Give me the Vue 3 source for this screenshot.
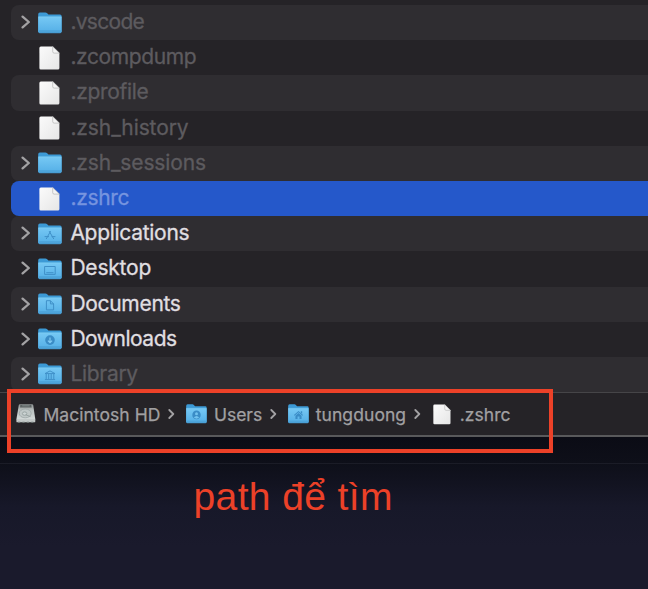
<script setup>
const rows = [
  { name: '.vscode', kind: 'folder', dim: true, ls: -0.7 },
  { name: '.zcompdump', kind: 'file', dim: true, ls: -0.38 },
  { name: '.zprofile', kind: 'file', dim: true, ls: -0.3 },
  { name: '.zsh_history', kind: 'file', dim: true, ls: -0.1 },
  { name: '.zsh_sessions', kind: 'folder', dim: true, ls: -0.15 },
  { name: '.zshrc', kind: 'file', dim: true, selected: true, ls: -0.3 },
  { name: 'Applications', kind: 'folder', glyph: 'apps', ls: -0.29 },
  { name: 'Desktop', kind: 'folder', glyph: 'desktop', ls: -0.2 },
  { name: 'Documents', kind: 'folder', glyph: 'doc', ls: -0.3 },
  { name: 'Downloads', kind: 'folder', glyph: 'down', ls: -0.48 },
  { name: 'Library', kind: 'folder', glyph: 'library', dim: true, ls: -0.3 },
]
const glyphs = {
  apps: 'M12.6 8.2L8.2 16M11.2 8.2L15.8 16M6.6 13.6H11M13.6 13.6H17.4',
  desktop: 'M6.6 8.5H17.2V16.4H6.6ZM8.3 14.7H15.5',
  doc: 'M8.4 7.7H12.4L15.6 10.9V16.9H8.4ZM12.4 7.7V10.9H15.6',
  library: 'M7 10.6L12 7.9L17 10.6ZM8.2 11V16M10.7 11V16M13.2 11V16M15.8 11V16M6.9 16.6H17.1',
}
const crumbs = [
  { name: 'Macintosh HD', kind: 'disk', ls: 0.05 },
  { name: 'Users', kind: 'folder', glyph: 'user', ls: 0 },
  { name: 'tungduong', kind: 'folder', glyph: 'home', ls: 0.08 },
  { name: '.zshrc', kind: 'file', ls: 0.05 },
]
</script>

<template>
  <div class="screen">
    <svg class="defs" width="0" height="0" aria-hidden="true">
      <defs>
        <linearGradient id="folderFace" x1="0" y1="0" x2="0" y2="1">
          <stop offset="0" stop-color="#76c8f4" />
          <stop offset="0.85" stop-color="#58b2e8" />
          <stop offset="1" stop-color="#4295cb" />
        </linearGradient>
        <linearGradient id="paper" x1="0" y1="0" x2="1" y2="1">
          <stop offset="0" stop-color="#fbfbfb" />
          <stop offset="1" stop-color="#e6e6e6" />
        </linearGradient>
        <linearGradient id="metal" x1="0" y1="0" x2="0" y2="1">
          <stop offset="0" stop-color="#8d9292" />
          <stop offset="0.4" stop-color="#b9c0bf" />
          <stop offset="1" stop-color="#d3d9d8" />
        </linearGradient>
        <symbol id="folder" viewBox="0 0 24 22">
          <path d="M0.2 2.2Q0.2 0.4 1.8 0.4H7.4Q8.4 0.4 9.2 1.3L10.4 2.4H22Q23.6 2.4 23.6 4V20H0.2Z" fill="#3c9ad6" />
          <path d="M0.2 4.9H23.6V19.8Q23.6 21.2 22.2 21.2H1.6Q0.2 21.2 0.2 19.8Z" fill="url(#folderFace)" />
          <path d="M0.3 4.8H23.5" stroke="#85d2f7" stroke-width="0.7" />
          <path d="M1 18.8H23" stroke="#3c90c6" stroke-width="0.5" />
        </symbol>
        <symbol id="file" viewBox="0 0 21 24">
          <path d="M1.8 0.4H13.8L20.4 7V21.9Q20.4 23.4 18.9 23.4H1.8Q0.4 23.4 0.4 21.9V1.9Q0.4 0.4 1.8 0.4Z" fill="url(#paper)" />
          <path d="M13.7 0.5V5.6Q13.7 7.1 15.2 7.1H20.4Z" fill="#f4f4f4" stroke="#aaa" stroke-width="0.6" />
        </symbol>
        <symbol id="disk" viewBox="0 0 20 20">
          <path d="M3.6 0.3H16.2Q17 0.3 17.2 1L19.3 15.2H0.4L2.8 1Q3 0.3 3.6 0.3Z" fill="url(#metal)" />
          <path d="M4.3 1.1H15.3L15.7 3.6H4Z" fill="#5c6363" />
          <path d="M6.2 1.8H13.6" stroke="#888f8f" stroke-width="0.8" />
          <ellipse cx="9.2" cy="9.4" rx="6" ry="4.4" fill="#c0c8c7" stroke="#98a2a2" stroke-width="0.7" />
          <ellipse cx="8.6" cy="9.6" rx="2.2" ry="1.7" fill="#cdd5d4" stroke="#8b9696" stroke-width="0.7" />
          <path d="M9.8 10.8L14.6 12.6" stroke="#8f9a99" stroke-width="0.8" />
          <path d="M0.4 14.9H19.3V17.4Q19.3 18.3 18.4 18.3H1.3Q0.4 18.3 0.4 17.4Z" fill="#c3c9c8" />
          <path d="M2 18.4H17.8" stroke="#6c7473" stroke-width="1.3" stroke-dasharray="2.2 2.2" />
        </symbol>
      </defs>
    </svg>

    <main class="finder">
      <ul class="list">
        <li v-for="row in rows" :key="row.name" class="row" :class="{ dim: row.dim, selected: row.selected }">
          <span class="disclosure">
            <svg v-if="row.kind === 'folder'" width="10" height="14" viewBox="0 0 10 14">
              <path d="M1.6 1.6L7.8 7L1.6 12.4" />
            </svg>
          </span>
          <span class="icon">
            <svg v-if="row.kind === 'folder'" width="24" height="22" viewBox="0 0 24 22">
              <use href="#folder" />
              <g v-if="row.glyph === 'down'">
                <circle cx="12" cy="12.1" r="4.8" fill="#3a8cc6" />
                <path class="arrow" d="M12 9.4V14.5M9.9 12.6L12 14.7L14.1 12.6" />
              </g>
              <path v-else-if="row.glyph" class="glyph" :d="glyphs[row.glyph]" />
            </svg>
            <svg v-else class="sheet" width="21" height="24"><use href="#file" /></svg>
          </span>
          <span class="name" :style="{ letterSpacing: row.ls + 'px' }">{{ row.name }}</span>
        </li>
      </ul>
      <nav class="path">
        <template v-for="(c, i) in crumbs" :key="c.name">
          <svg v-if="i" class="sep" width="7" height="10" viewBox="0 0 7 10"><path d="M1.3 1L5.3 5L1.3 9" /></svg>
          <span class="crumb" :class="c.kind">
            <svg v-if="c.kind === 'folder'" width="21" height="20" viewBox="0 0 24 22" preserveAspectRatio="none">
              <use href="#folder" />
              <g v-if="c.glyph === 'user'">
                <circle cx="12" cy="12" r="4.8" fill="#3a8cc6" />
                <circle cx="12" cy="10.7" r="1.7" fill="#72c2ef" />
                <path d="M8.9 14.9Q12 11.4 15.1 14.9Q12 17.4 8.9 14.9Z" fill="#72c2ef" />
              </g>
              <g v-else>
                <path d="M6.8 12.1L12 7.6L17.2 12.1L16.4 12.9L12 9.1L7.6 12.9ZM14.6 8H16.2V10.6L14.6 9.3Z" fill="#3a8cc6" />
                <path d="M8.5 13L12 10L15.5 13V16.6H13.1V13.8H10.9V16.6H8.5Z" fill="#3a8cc6" />
              </g>
            </svg>
            <svg v-else-if="c.kind === 'file'" width="18" height="21"><use href="#file" /></svg>
            <svg v-else width="20" height="20"><use href="#disk" /></svg>
            <span class="label" :style="{ letterSpacing: c.ls + 'px' }">{{ c.name }}</span>
          </span>
        </template>
      </nav>
    </main>
    <section class="desktop">
      <div class="shade"></div>
      <p class="note">path để tìm</p>
    </section>
    <div class="marker"></div>
  </div>
</template>

<style>
body {
  margin: 0;
  background: #1a1a2b;
}
</style>

<style scoped>
.screen {
  position: relative;
  display: flex;
  flex-direction: column;
  width: 648px;
  height: 589px;
  overflow: hidden;
  font-family: Inter, "Liberation Sans", sans-serif;
}
.defs {
  position: absolute;
}
.finder {
  flex: none;
  height: 437px;
  box-sizing: border-box;
  background: #252327;
  border-bottom: 2px solid #59595b;
}
.list {
  list-style: none;
  margin: 0;
  padding: 5px 0 0 11px;
  height: 387px;
}
.row {
  display: flex;
  align-items: center;
  height: 35.2px;
  border-radius: 8px 0 0 8px;
  color: #e0dfe1;
  font-size: 21px;
}
.row:nth-child(odd) {
  background: #2f2d31;
}
.row.dim {
  color: #5d5b5f;
}
.row.selected {
  background: #2558ca;
  color: #7694df;
}
.disclosure {
  display: flex;
  width: 27px;
  padding-left: 10px;
  padding-bottom: 1px;
  box-sizing: border-box;
}
.disclosure path {
  fill: none;
  stroke: #a3a2a4;
  stroke-width: 2.3;
  stroke-linecap: round;
  stroke-linejoin: round;
}
.icon {
  display: flex;
  justify-content: center;
  width: 24px;
  margin-right: 8.4px;
}
.sheet {
  margin-right: 1px;
}
.name {
  white-space: nowrap;
  padding-bottom: 2px;
  -webkit-text-stroke: 0.3px currentColor;
}
.glyph {
  fill: none;
  stroke: #3f90c8;
  stroke-width: 1;
}
.arrow {
  fill: none;
  stroke: #7fcaf3;
  stroke-width: 1.2;
}
.path {
  display: flex;
  align-items: center;
  height: 43px;
  box-sizing: border-box;
  padding-left: 16px;
  border-top: 1px solid #464548;
  color: #a1a0a2;
  font-size: 17.5px;
}
.crumb {
  display: flex;
  align-items: center;
  gap: 6.5px;
  white-space: nowrap;
}
.crumb.disk {
  gap: 7.4px;
}
.crumb.file {
  gap: 8.5px;
  margin-left: 1px;
}
.label {
  -webkit-text-stroke: 0.25px currentColor;
}
.sep {
  margin: 0 11px 0 8px;
}
.sep path {
  fill: none;
  stroke: #a3a2a4;
  stroke-width: 1.8;
  stroke-linecap: round;
  stroke-linejoin: round;
}
.desktop {
  flex: 1;
  background: linear-gradient(#0b0c15 0, #0e0f19 26px, #171829 70px, #1a1a2c 110px);
}
.shade {
  height: 26px;
  border-bottom: 1px solid #1b1c27;
}
.note {
  margin: 11px 0 0 193.5px;
  color: #ec4128;
  font: 39px/44px "Liberation Sans", Arial, sans-serif;
  letter-spacing: 0.38px;
  white-space: nowrap;
}
.marker {
  position: absolute;
  left: 7px;
  top: 389px;
  width: 546px;
  height: 64px;
  box-sizing: border-box;
  border: 4px solid #ec4128;
}
</style>
